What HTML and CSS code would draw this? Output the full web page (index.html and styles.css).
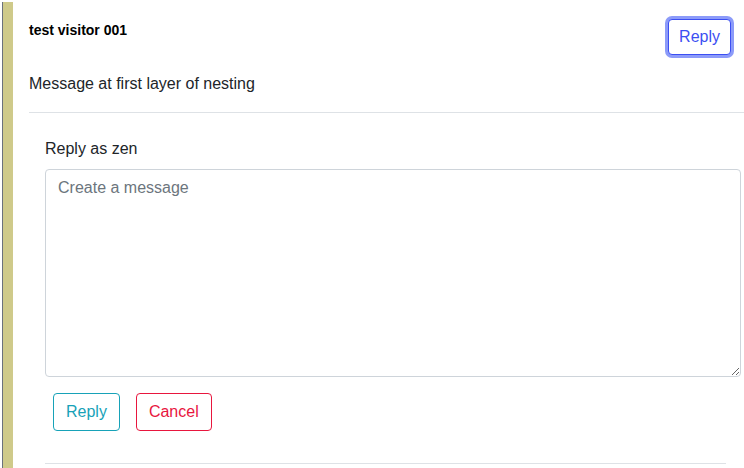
FILE: index.html
```html
<!DOCTYPE html>
<html lang="en">
<head>
<meta charset="utf-8">
<title>Thread</title>
<link rel="stylesheet" href="styles.css">
</head>
<body>
<div class="thread">
  <div class="bar"></div>
  <div class="content">
    <div class="header">
      <div class="author">test visitor 001</div>
      <button class="btn btn-focus" type="button">Reply</button>
    </div>
    <p class="message">Message at first layer of nesting</p>
    <hr class="divider">
    <div class="reply-form">
      <label class="label" for="msg">Reply as zen</label>
      <textarea id="msg" class="textarea" placeholder="Create a message"></textarea>
      <div class="actions">
        <button class="btn btn-info" type="button">Reply</button>
        <button class="btn btn-danger" type="button">Cancel</button>
      </div>
      <hr class="divider divider-bottom">
    </div>
  </div>
</div>
</body>
</html>
```
FILE: styles.css
```css
html, body {
  margin: 0;
  padding: 0;
  background: #ffffff;
}
body {
  font-family: "Liberation Sans", Arial, sans-serif;
  color: #212529;
  font-size: 16px;
  line-height: 24px;
  overflow: hidden;
}
.thread {
  display: flex;
  margin: 2px 0 0 2px;
  border-left: 1px solid #6b717c;
  min-height: 480px;
}
.bar {
  width: 10px;
  flex: none;
  background: #cfca8a;
}
.content {
  flex: 1;
  padding: 17px 0 0 16px;
  min-width: 0;
}
.header {
  display: flex;
  justify-content: space-between;
  align-items: flex-start;
}
.author {
  font-size: 14px;
  font-weight: bold;
  line-height: 21px;
  color: #000;
  margin-top: 1px;
}
.btn {
  font-family: "Liberation Sans", Arial, sans-serif;
  font-size: 16px;
  line-height: 24px;
  padding: 6px 12px;
  background: #fff;
  border: 1px solid;
  border-radius: 4px;
  cursor: pointer;
}
.btn-focus {
  color: #3c4ff2;
  border-color: #3c4ff2;
  padding: 5px 10px;
  margin: 0 13px 0 0;
  box-shadow: 0 0 0 3px #8c9bf9;
}
.message {
  margin: 17px 0 16px;
}
.divider {
  border: 0;
  border-top: 1px solid #dee2e6;
  margin: 0;
}
.reply-form {
  padding: 24px 3px 0 16px;
}
.label {
  display: block;
  margin-bottom: 8px;
}
.textarea {
  display: block;
  box-sizing: border-box;
  width: 100%;
  height: 208px;
  padding: 6px 12px;
  border: 1px solid #ced4da;
  border-radius: 4px;
  font-family: "Liberation Sans", Arial, sans-serif;
  font-size: 16px;
  line-height: 24px;
  color: #212529;
  margin: 0;
}
.textarea::placeholder {
  color: #6c757d;
}
.actions {
  display: flex;
  gap: 16px;
  padding: 16px 8px 0;
}
.btn-info {
  color: #17a2b8;
  border-color: #17a2b8;
}
.btn-danger {
  color: #e8163e;
  border-color: #e8163e;
}
.divider-bottom {
  margin: 32px 15px 0 0;
}
```
